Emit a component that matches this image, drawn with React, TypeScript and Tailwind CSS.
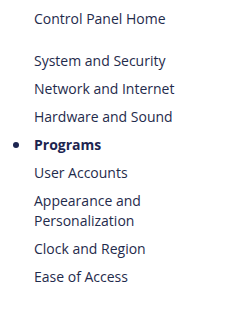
const items = [
  "System and Security",
  "Network and Internet",
  "Hardware and Sound",
  "Programs",
  "User Accounts",
  "Appearance and Personalization",
  "Clock and Region",
  "Ease of Access",
];

export default function App() {
  return (
    <div
      className="w-[226px] h-[325px] bg-white pt-[9px] text-[14px] leading-5 text-[#1f2b4c]"
      style={{ fontFamily: '"Open Sans", "Noto Sans", sans-serif' }}
    >
      <div className="pl-[34px]">Control Panel Home</div>
      <ul className="mt-[22px] flex flex-col gap-2">
        {items.map((item) => {
          const active = item === "Programs";
          return (
            <li key={item} className="relative pl-[34px]">
              {active && (
                <span className="absolute left-[13px] top-[7px] w-[6px] h-[6px] rounded-full bg-[#1c2550]" />
              )}
              <span className={`block w-[155px] ${active ? "font-bold text-[#1c2550]" : ""}`}>{item}</span>
            </li>
          );
        })}
      </ul>
    </div>
  );
}
